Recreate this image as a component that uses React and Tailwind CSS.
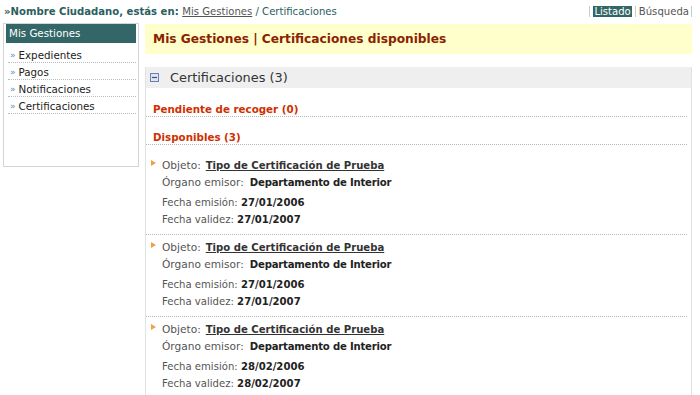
import React from "react";

const items = [
  { e: "27/01/2006", v: "27/01/2007" },
  { e: "27/01/2006", v: "27/01/2007" },
  { e: "28/02/2006", v: "28/02/2007" },
];

function Arrow() {
  return (
    <svg width="5" height="6" viewBox="0 0 5 6" className="absolute left-[-11px] top-[3px]">
      <path d="M0 0 L5 3 L0 6 Z" fill="#f5a040" />
    </svg>
  );
}

function Item({ e, v, first }) {
  return (
    <div className={`mr-[4px] border-b border-dotted border-[#b8b8b8] pb-[6px] ${first ? "pt-[12px]" : "pt-[4px]"}`}>
      <div className="relative ml-[16px] h-[17px] leading-[17px]">
        <Arrow />
        <span className="text-[10.6px] text-[#555]">Objeto:</span>
        <span className="ml-[5px] font-bold text-[#333] underline">Tipo de Certificación de Prueba</span>
      </div>
      <div className="ml-[16px] h-[17px] leading-[17px]">
        <span className="text-[10.6px] text-[#555]">Órgano emisor:</span>
        <span className="ml-[6px] font-bold tracking-[-0.2px] text-[#222]">Departamento de Interior</span>
      </div>
      <div className="ml-[16px] mt-[3px] h-[17px] leading-[17px]">
        <span className="text-[#555]">Fecha emisión: </span>
        <span className="font-bold text-[#222]">{e}</span>
      </div>
      <div className="ml-[16px] h-[17px] leading-[17px]">
        <span className="text-[#555]">Fecha validez: </span>
        <span className="font-bold text-[#222]">{v}</span>
      </div>
    </div>
  );
}

export default function App() {
  const nav = ["Expedientes", "Pagos", "Notificaciones", "Certificaciones"];
  return (
    <div
      className="w-[700px] h-[395px] overflow-hidden bg-white text-[10.1px] text-[#333]"
      style={{ fontFamily: '"DejaVu Sans", Verdana, sans-serif' }}
    >
      {/* top bar */}
      <div className="flex h-[22px] items-start justify-between pl-[4px] pr-[8px] pt-[5px]">
        <div className="leading-[13px] text-[#2a6060]">
          <span className="font-bold">»</span>
          <span className="font-bold">Nombre Ciudadano, estás en: </span>
          <span className="text-[#555] underline">Mis Gestiones</span>
          <span> / Certificaciones</span>
        </div>
        <div className="flex items-center leading-[11px] pt-[1px]">
          <span className="h-[11px] w-px bg-[#ccc]" />
          <span className="ml-[3px] bg-[#336666] px-[1px] text-white">Listado</span>
          <span className="ml-[3px] h-[11px] w-px bg-[#ccc]" />
          <span className="ml-[3px] text-[#555]">Búsqueda</span>
          <span className="ml-[2px] h-[11px] w-px bg-[#ccc]" />
        </div>
      </div>

      <div className="flex items-start">
        {/* sidebar */}
        <div className="ml-[3px] mt-px h-[144px] w-[136px] border border-[#d4d4d4] px-[2px]">
          <div className="h-[19px] bg-[#336666] pl-[3px] text-[10.3px] leading-[19px] text-white">
            Mis Gestiones
          </div>
          <div className="mt-[3px] pl-[2px]">
            {nav.map((n) => (
              <div key={n} className="flex h-[17px] items-center border-b border-dotted border-[#bbb] pt-[2px] leading-[15px] text-[10.3px]">
                <span className="ml-[2px] mr-[3px] text-[9px] text-[#6a8cb0]">»</span>
                <span className="text-[#222]">{n}</span>
              </div>
            ))}
          </div>
        </div>

        {/* main */}
        <div className="ml-[6px] mt-[2px] w-[547px]">
          <div className="flex h-[30px] items-center bg-[#ffffcc] pl-[8px] text-[12.2px] font-bold text-[#8b2200]">
            Mis Gestiones | Certificaciones disponibles
          </div>
          <div className="mt-[13px] h-[400px] border-x border-[#e2e2e2]">
            <div className="flex h-[21px] items-center bg-[#efefef] pl-[4px]">
              <svg width="9" height="9" viewBox="0 0 9 9">
                <rect x="0.5" y="0.5" width="8" height="8" fill="#dfe4f2" stroke="#6f7fae" />
                <line x1="2" y1="4.5" x2="7" y2="4.5" stroke="#3b4f8a" strokeWidth="1.2" />
              </svg>
              <span className="ml-[11px] text-[12.9px] text-[#333]">Certificaciones (3)</span>
            </div>
            <div className="mr-[4px] border-b border-dotted border-[#b8b8b8] pl-[7px] pt-[14px] font-bold leading-[14px] text-[#d03000] text-[10.3px]">
              Pendiente de recoger (0)
            </div>
            <div className="mr-[4px] border-b border-dotted border-[#b8b8b8] pl-[7px] pt-[13px] font-bold leading-[14px] text-[#d03000] text-[10.3px]">
              Disponibles (3)
            </div>
            {items.map((it, i) => (
              <Item key={i} e={it.e} v={it.v} first={i === 0} />
            ))}
          </div>
        </div>
      </div>
    </div>
  );
}
